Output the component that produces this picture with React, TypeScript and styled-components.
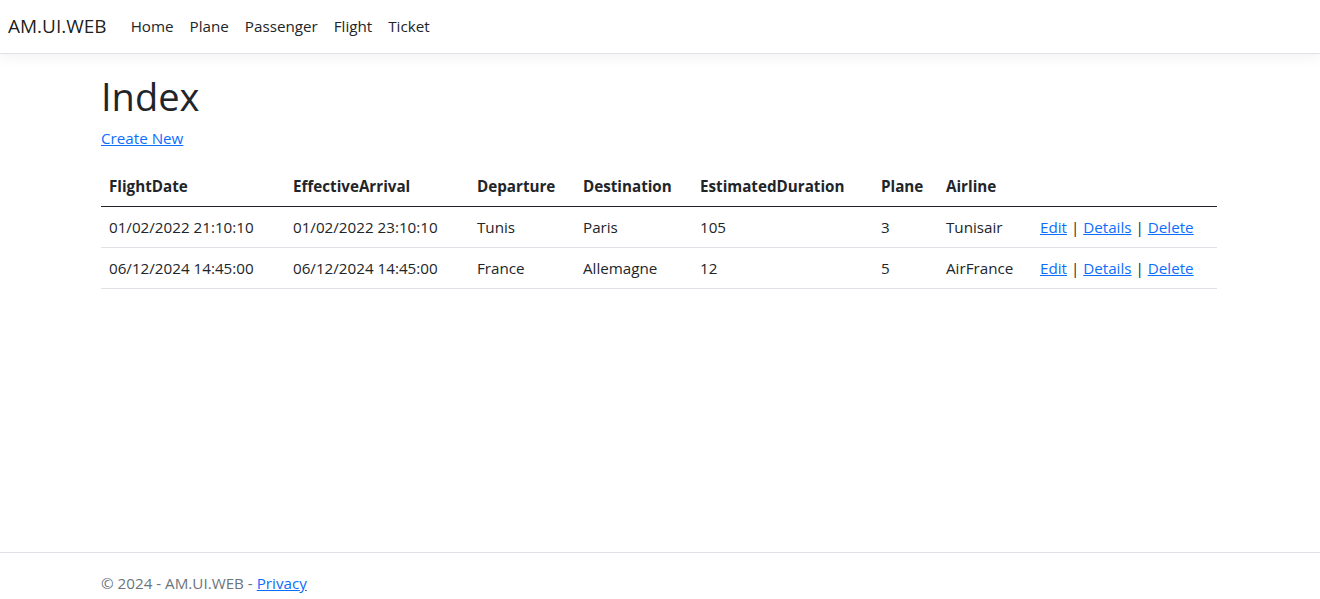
import React from "react";
import styled, { createGlobalStyle } from "styled-components";

const Global = createGlobalStyle`
  html, body { margin: 0; padding: 0; background: #fff; }
  body {
    font-family: "Segoe UI", "Open Sans", "Liberation Sans", sans-serif;
    font-size: 15.2px;
    line-height: 24px;
    color: #212529;
  }
  * { box-sizing: border-box; }
`;

const Page = styled.div`
  display: flex;
  flex-direction: column;
`;

const Navbar = styled.header`
  display: flex;
  align-items: center;
  height: 54px;
  padding: 0 8px 2px 8px;
  border-bottom: 1px solid #dee2e6;
  box-shadow: 0 4px 12px rgba(0, 0, 0, 0.05);
  background: #fff;
`;

const Brand = styled.a`
  font-size: 19px;
  color: rgba(0, 0, 0, 0.9);
  text-decoration: none;
  margin-right: 16px;
  line-height: 30px;
`;

const NavList = styled.nav`
  display: flex;
`;

const NavLink = styled.a`
  color: #212529;
  text-decoration: none;
  padding: 8px;
`;

const Main = styled.main`
  width: 1140px;
  margin: 0 auto;
  padding: 18px 13px 0 11px;
  min-height: 498px;
`;

const Title = styled.h1`
  font-size: 38px;
  font-weight: 500;
  line-height: 48px;
  margin: 0 0 6px 0;
`;

const Link = styled.a`
  color: #0d6efd;
  text-decoration: underline;
`;

const Para = styled.p`
  margin: 0 0 16px 0;
`;

const Table = styled.table`
  width: 100%;
  border-collapse: collapse;
  table-layout: fixed;
`;

const Th = styled.th<{ $w: number }>`
  width: ${(p) => p.$w}px;
  text-align: left;
  font-weight: 700;
  padding: 8px;
  border-bottom: 1px solid #212529;
  vertical-align: bottom;
`;

const Td = styled.td`
  padding: 8px;
  border-bottom: 1px solid #dee2e6;
  white-space: nowrap;
`;

const Footer = styled.footer`
  border-top: 1px solid #dee2e6;
  line-height: 60px;
  color: #6c757d;
`;

const FooterInner = styled.div`
  width: 1140px;
  margin: 0 auto;
  padding: 0 11px;
`;

const cols = [
  ["FlightDate", 184],
  ["EffectiveArrival", 184],
  ["Departure", 106],
  ["Destination", 117],
  ["EstimatedDuration", 181],
  ["Plane", 65],
  ["Airline", 94],
  ["", 185],
] as const;

const rows = [
  ["01/02/2022 21:10:10", "01/02/2022 23:10:10", "Tunis", "Paris", "105", "3", "Tunisair"],
  ["06/12/2024 14:45:00", "06/12/2024 14:45:00", "France", "Allemagne", "12", "5", "AirFrance"],
];

export default function App() {
  return (
    <Page>
      <Global />
      <Navbar>
        <Brand href="#">AM.UI.WEB</Brand>
        <NavList>
          {["Home", "Plane", "Passenger", "Flight", "Ticket"].map((n) => (
            <NavLink key={n} href="#">{n}</NavLink>
          ))}
        </NavList>
      </Navbar>
      <Main>
        <Title>Index</Title>
        <Para>
          <Link href="#">Create New</Link>
        </Para>
        <Table>
          <thead>
            <tr>
              {cols.map(([c, w], i) => (
                <Th key={i} $w={w}>{c}</Th>
              ))}
            </tr>
          </thead>
          <tbody>
            {rows.map((r, i) => (
              <tr key={i}>
                {r.map((c, j) => (
                  <Td key={j}>{c}</Td>
                ))}
                <Td>
                  <Link href="#">Edit</Link> | <Link href="#">Details</Link> |{" "}
                  <Link href="#">Delete</Link>
                </Td>
              </tr>
            ))}
          </tbody>
        </Table>
      </Main>
      <Footer>
        <FooterInner>
          © 2024 - AM.UI.WEB - <Link href="#">Privacy</Link>
        </FooterInner>
      </Footer>
    </Page>
  );
}
